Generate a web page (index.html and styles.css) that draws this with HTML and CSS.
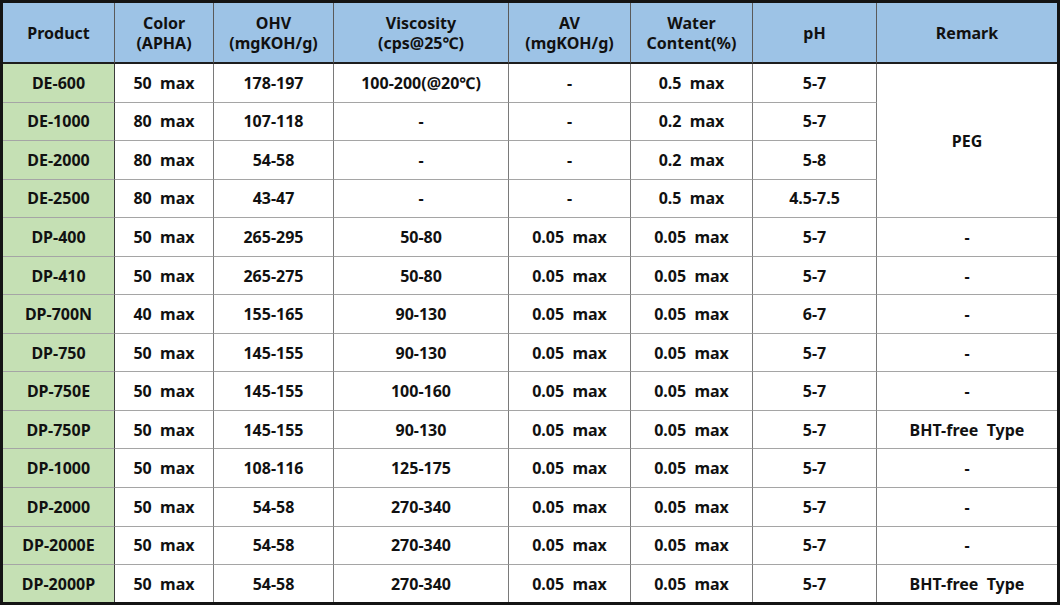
FILE: index.html
```html
<!DOCTYPE html>
<html>
<head>
<meta charset="utf-8">
<link rel="stylesheet" href="styles.css">
</head>
<body>
<div class="frame">
<table class="spec">
<colgroup>
<col class="c-prod"><col class="c-color"><col class="c-ohv"><col class="c-visc"><col class="c-av"><col class="c-water"><col class="c-ph"><col class="c-rem">
</colgroup>
<thead>
<tr>
<th>Product</th>
<th>Color<br>(APHA)</th>
<th>OHV<br>(mgKOH/g)</th>
<th>Viscosity<br>(cps@25℃)</th>
<th>AV<br>(mgKOH/g)</th>
<th>Water<br>Content(%)</th>
<th>pH</th>
<th class="last">Remark</th>
</tr>
</thead>
<tbody>
<tr><td class="prod">DE-600</td><td>50  max</td><td>178-197</td><td>100-200(@20℃)</td><td>-</td><td>0.5  max</td><td>5-7</td><td class="last" rowspan="4">PEG</td></tr>
<tr><td class="prod">DE-1000</td><td>80  max</td><td>107-118</td><td>-</td><td>-</td><td>0.2  max</td><td>5-7</td></tr>
<tr><td class="prod">DE-2000</td><td>80  max</td><td>54-58</td><td>-</td><td>-</td><td>0.2  max</td><td>5-8</td></tr>
<tr><td class="prod">DE-2500</td><td>80  max</td><td>43-47</td><td>-</td><td>-</td><td>0.5  max</td><td>4.5-7.5</td></tr>
<tr><td class="prod">DP-400</td><td>50  max</td><td>265-295</td><td>50-80</td><td>0.05  max</td><td>0.05  max</td><td>5-7</td><td class="last">-</td></tr>
<tr><td class="prod">DP-410</td><td>50  max</td><td>265-275</td><td>50-80</td><td>0.05  max</td><td>0.05  max</td><td>5-7</td><td class="last">-</td></tr>
<tr><td class="prod">DP-700N</td><td>40  max</td><td>155-165</td><td>90-130</td><td>0.05  max</td><td>0.05  max</td><td>6-7</td><td class="last">-</td></tr>
<tr><td class="prod">DP-750</td><td>50  max</td><td>145-155</td><td>90-130</td><td>0.05  max</td><td>0.05  max</td><td>5-7</td><td class="last">-</td></tr>
<tr><td class="prod">DP-750E</td><td>50  max</td><td>145-155</td><td>100-160</td><td>0.05  max</td><td>0.05  max</td><td>5-7</td><td class="last">-</td></tr>
<tr><td class="prod">DP-750P</td><td>50  max</td><td>145-155</td><td>90-130</td><td>0.05  max</td><td>0.05  max</td><td>5-7</td><td class="last">BHT-free  Type</td></tr>
<tr><td class="prod">DP-1000</td><td>50  max</td><td>108-116</td><td>125-175</td><td>0.05  max</td><td>0.05  max</td><td>5-7</td><td class="last">-</td></tr>
<tr><td class="prod">DP-2000</td><td>50  max</td><td>54-58</td><td>270-340</td><td>0.05  max</td><td>0.05  max</td><td>5-7</td><td class="last">-</td></tr>
<tr><td class="prod">DP-2000E</td><td>50  max</td><td>54-58</td><td>270-340</td><td>0.05  max</td><td>0.05  max</td><td>5-7</td><td class="last">-</td></tr>
<tr class="final"><td class="prod">DP-2000P</td><td>50  max</td><td>54-58</td><td>270-340</td><td>0.05  max</td><td>0.05  max</td><td>5-7</td><td class="last">BHT-free  Type</td></tr>
</tbody>
</table>
</div>
</body>
</html>
```

FILE: styles.css
```css
* { box-sizing: border-box; }
html, body { margin: 0; padding: 0; background: #fff; }
.frame {
  width: 1060px;
  height: 605px;
  border: 3px solid #141414;
  background: #fff;
}
.spec {
  width: 100%;
  height: 100%;
  table-layout: fixed;
  border-collapse: separate;
  border-spacing: 0;
  font-family: "Noto Sans", "Open Sans", sans-serif;
  font-weight: 700;
  font-size: 16px;
  color: #111;
}
.c-prod { width: 112px; }
.c-color { width: 99px; }
.c-ohv { width: 120px; }
.c-visc { width: 175px; }
.c-av { width: 122px; }
.c-water { width: 122px; }
.c-ph { width: 124px; }
.c-rem { width: 180px; }
.spec th {
  height: 61px;
  background: #9dc3e6;
  font-weight: 700;
  line-height: 20px;
  padding: 0 2px;
  border-right: 1px solid #5a5a5a;
  border-bottom: 2px solid #1e1e1e;
  text-align: center;
  vertical-align: middle;
}
.spec td {
  padding: 0 2px;
  text-align: center;
  vertical-align: middle;
  white-space: pre;
  border-right: 1px solid #7a7a7a;
  border-bottom: 1px solid #a5a5a5;
  line-height: 20px;
}
.spec td.prod {
  background: #c5e0b4;
  border-right: 1px solid #3c3c3c;
}
.spec th.last, .spec td.last { border-right: none; }
.spec tr.final td { border-bottom: none; }
```
